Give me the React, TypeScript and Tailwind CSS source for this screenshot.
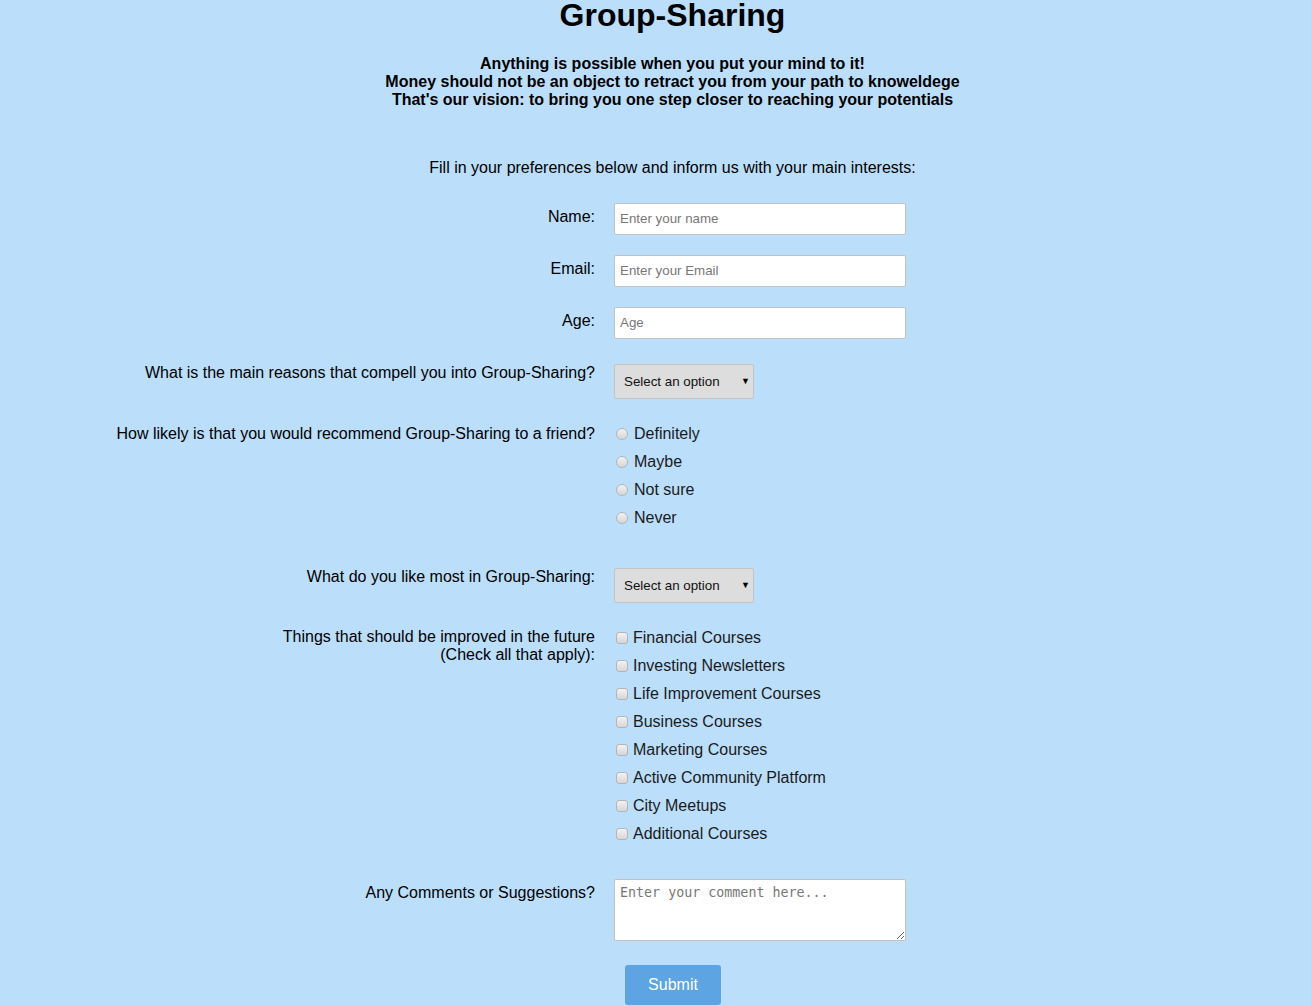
import React from "react";

const font = { fontFamily: '"Liberation Sans", Arial, sans-serif' };

function Row({ label, children, labelPt = "pt-[5px]", className = "" }: { label: React.ReactNode; children: React.ReactNode; labelPt?: string; className?: string }) {
  return (
    <div className={`flex items-start ${className}`}>
      <div className={`w-[595px] shrink-0 text-right text-[16px] leading-[18px] text-black ${labelPt}`}>{label}</div>
      <div className="ml-[19px]">{children}</div>
    </div>
  );
}

function Select() {
  return (
    <div className="relative mt-[1px] h-[35px] w-[140px]">
      <select
        className="h-[35px] w-[140px] appearance-none rounded-[2px] border border-[#c4c4c4] bg-[#dddddd] pl-[9px] text-[13.33px] text-[#111] outline-none"
        style={font}
        defaultValue=""
      >
        <option value="">Select an option</option>
      </select>
      <span className="pointer-events-none absolute right-[4px] top-[11px] text-[9px] leading-[12px] text-black">▼</span>
    </div>
  );
}

function Radio({ label }: { label: string }) {
  return (
    <label className="flex h-[28px] items-center">
      <span className="ml-[2px] box-border h-[12px] w-[12px] rounded-full border border-[#b5b5b5] bg-gradient-to-b from-[#f2f2f2] to-[#d6d6d6]" />
      <span className="ml-[6px] text-[16px] text-[#1a1a1a]">{label}</span>
    </label>
  );
}

function Check({ label }: { label: string }) {
  return (
    <label className="flex h-[28px] items-center">
      <span className="ml-[2px] box-border h-[12px] w-[12px] rounded-[3px] border border-[#b5b5b5] bg-gradient-to-b from-[#f2f2f2] to-[#d6d6d6]" />
      <span className="ml-[5px] text-[16px] text-[#1a1a1a]">{label}</span>
    </label>
  );
}

function Input({ placeholder }: { placeholder: string }) {
  return (
    <input
      placeholder={placeholder}
      className="box-border h-[32px] w-[292px] rounded-[2px] border border-[#c2c2c2] bg-white px-[5px] pb-[2px] text-[13.33px] text-black outline-none placeholder:text-[#777]"
      style={font}
    />
  );
}

export default function App() {
  return (
    <div className="min-h-[1006px] w-full overflow-hidden bg-[#bbdefb] pl-[34px] text-black" style={font}>
      <h1 className="mt-[-3px] text-center text-[32px] font-bold leading-[37px]">Group-Sharing</h1>
      <div className="mt-[21px] text-center text-[16px] font-bold leading-[18px]">
        <div>Anything is possible when you put your mind to it!</div>
        <div>Money should not be an object to retract you from your path to knoweldege</div>
        <div>That's our vision: to bring you one step closer to reaching your potentials</div>
      </div>
      <p className="mt-[50px] text-center text-[16px] leading-[18px]">Fill in your preferences below and inform us with your main interests:</p>

      <div className="-ml-[34px] mt-[26px] flex flex-col">
        <Row label="Name:">
          <Input placeholder="Enter your name" />
        </Row>
        <Row label="Email:" className="mt-[20px]">
          <Input placeholder="Enter your Email" />
        </Row>
        <Row label="Age:" className="mt-[20px]">
          <Input placeholder="Age" />
        </Row>
        <Row label="What is the main reasons that compell you into Group-Sharing?" labelPt="pt-[1px]" className="mt-[24px]">
          <Select />
        </Row>
        <Row label="How likely is that you would recommend Group-Sharing to a friend?" labelPt="pt-[5px]" className="mt-[21px]">
          <div className="flex flex-col">
            <Radio label="Definitely" />
            <Radio label="Maybe" />
            <Radio label="Not sure" />
            <Radio label="Never" />
          </div>
        </Row>
        <Row label="What do you like most in Group-Sharing:" labelPt="pt-[1px]" className="mt-[35px]">
          <Select />
        </Row>
        <Row
          label={
            <>
              <div>Things that should be improved in the future</div>
              <div>(Check all that apply):</div>
            </>
          }
          labelPt="pt-[4px]"
          className="mt-[21px]"
        >
          <div className="flex flex-col">
            <Check label="Financial Courses" />
            <Check label="Investing Newsletters" />
            <Check label="Life Improvement Courses" />
            <Check label="Business Courses" />
            <Check label="Marketing Courses" />
            <Check label="Active Community Platform" />
            <Check label="City Meetups" />
            <Check label="Additional Courses" />
          </div>
        </Row>
        <Row label="Any Comments or Suggestions?" className="mt-[31px]">
          <textarea
            placeholder="Enter your comment here..."
            className="box-border block h-[62px] w-[292px] rounded-[2px] border border-[#c2c2c2] bg-white px-[5px] py-[5px] text-[13.33px] leading-[15px] text-black outline-none placeholder:text-[#777]"
            style={{ fontFamily: '"DejaVu Sans Mono", monospace' }}
          />
        </Row>
        <div className="mt-[24px] pl-[625px]">
          <button className="h-[40px] w-[96px] rounded-[3px] bg-[#5da4e2] text-[16px] text-white" style={font}>
            Submit
          </button>
        </div>
      </div>
    </div>
  );
}
